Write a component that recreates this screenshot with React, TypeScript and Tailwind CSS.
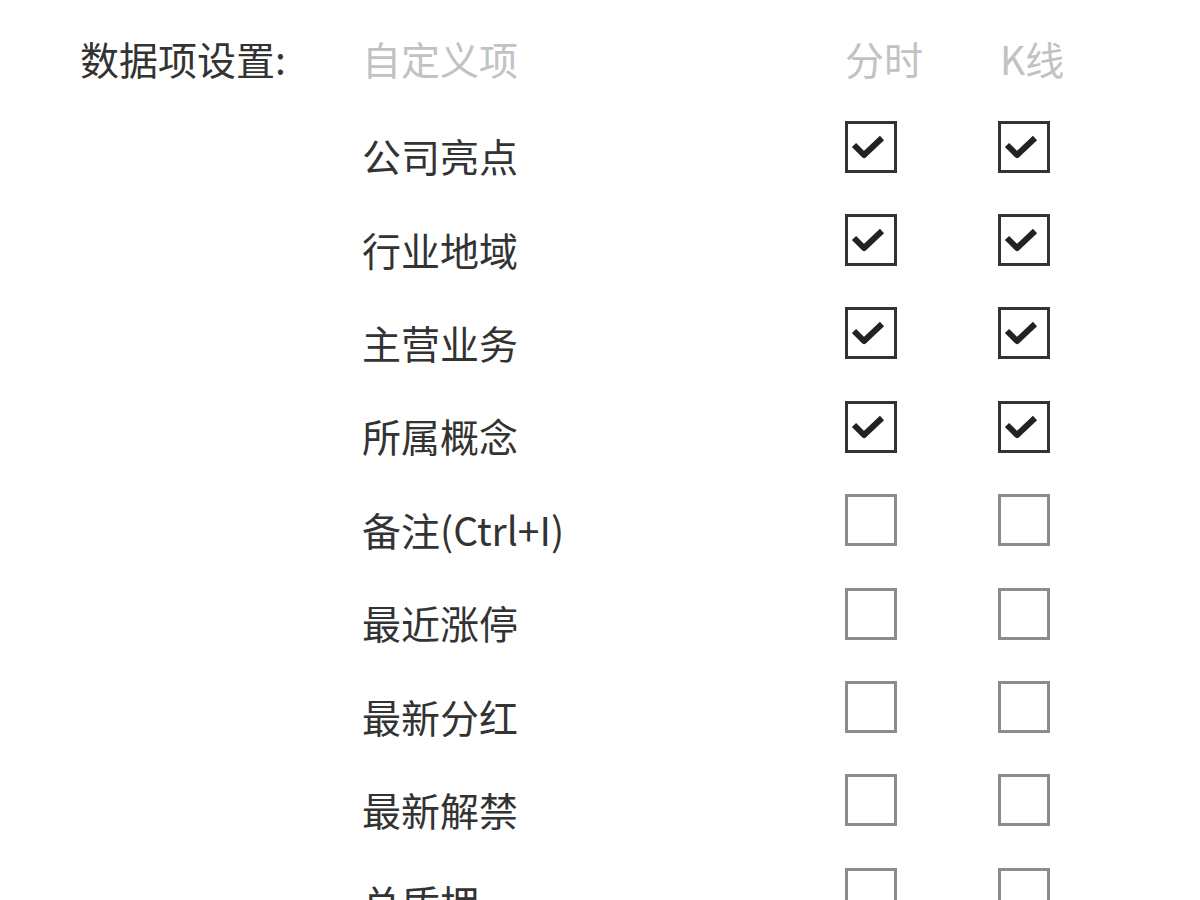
import React from "react";

type Item = { label: string; fs: boolean; kline: boolean };

const items: Item[] = [
  { label: "公司亮点", fs: true, kline: true },
  { label: "行业地域", fs: true, kline: true },
  { label: "主营业务", fs: true, kline: true },
  { label: "所属概念", fs: true, kline: true },
  { label: "备注(Ctrl+I)", fs: false, kline: false },
  { label: "最近涨停", fs: false, kline: false },
  { label: "最新分红", fs: false, kline: false },
  { label: "最新解禁", fs: false, kline: false },
  { label: "总质押", fs: false, kline: false },
  { label: "机构评级", fs: false, kline: false },
];

function Box({ checked }: { checked: boolean }) {
  return (
    <div
      className={
        checked
          ? "w-[52px] h-[52px] border-[3px] border-[#333333] bg-white shrink-0"
          : "w-[52px] h-[52px] border-[3px] border-[#8c8c8c] bg-white shrink-0"
      }
    >
      {checked && (
        <svg width="46" height="46" viewBox="0 0 46 46" className="block">
          <path
            d="M6 21 L16 31 L34 14"
            fill="none"
            stroke="#222222"
            strokeWidth="6"
            strokeLinejoin="round"
          />
        </svg>
      )}
    </div>
  );
}

export default function App() {
  return (
    <div
      className="w-[1200px] h-[900px] overflow-hidden bg-white text-[#333333]"
      style={{ fontFamily: '"Noto Sans CJK SC", "Noto Sans", sans-serif' }}
    >
      <div className="flex pt-[16px] pl-[80px]">
        <div className="w-[282px] shrink-0 h-[84px] flex items-center text-[39px] leading-none">
          数据项设置:
        </div>
        <div className="flex flex-col">
          <div className="h-[84px] flex items-center text-[39px] leading-none text-[#c2c2c2]">
            <div className="w-[483px]">自定义项</div>
            <div className="w-[155px]">分时</div>
            <div>K线</div>
          </div>
          {items.map((it) => (
            <div key={it.label} className="h-[93.4px] flex items-center">
              <div className="w-[483px] mt-[18px] text-[39px] leading-none whitespace-nowrap">
                {it.label}
              </div>
              <Box checked={it.fs} />
              <div className="w-[101px]" />
              <Box checked={it.kline} />
            </div>
          ))}
        </div>
      </div>
    </div>
  );
}
